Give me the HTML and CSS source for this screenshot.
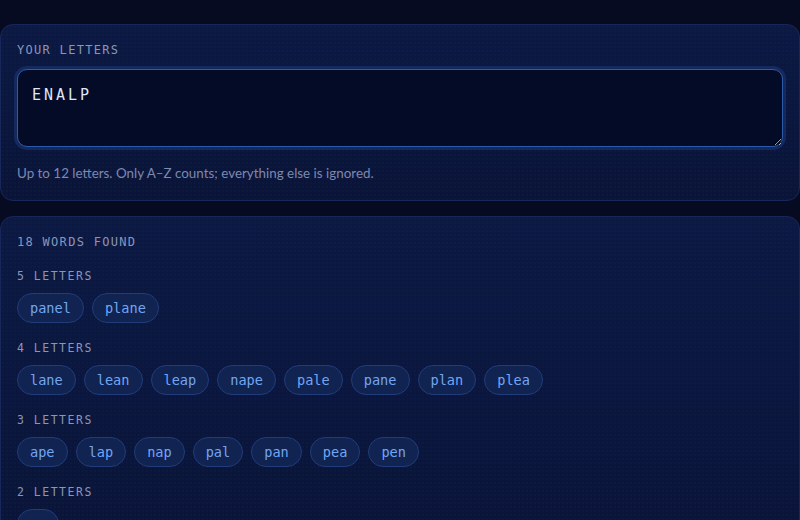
FILE: index.html
```html
<!DOCTYPE html>
<html lang="en">
<head>
<meta charset="utf-8">
<title>Word Finder</title>
<link rel="stylesheet" href="styles.css">
</head>
<body>
<main class="page">
  <section class="card">
    <label class="section-label" for="letters">YOUR LETTERS</label>
    <textarea id="letters" class="letters-input" spellcheck="false">ENALP</textarea>
    <p class="hint">Up to 12 letters. Only A–Z counts; everything else is ignored.</p>
  </section>

  <section class="card results">
    <div class="section-label">18 WORDS FOUND</div>

    <div class="group">
      <div class="group-label">5 LETTERS</div>
      <ul class="chips">
        <li class="chip">panel</li>
        <li class="chip">plane</li>
      </ul>
    </div>

    <div class="group">
      <div class="group-label">4 LETTERS</div>
      <ul class="chips">
        <li class="chip">lane</li>
        <li class="chip">lean</li>
        <li class="chip">leap</li>
        <li class="chip">nape</li>
        <li class="chip">pale</li>
        <li class="chip">pane</li>
        <li class="chip">plan</li>
        <li class="chip">plea</li>
      </ul>
    </div>

    <div class="group">
      <div class="group-label">3 LETTERS</div>
      <ul class="chips">
        <li class="chip">ape</li>
        <li class="chip">lap</li>
        <li class="chip">nap</li>
        <li class="chip">pal</li>
        <li class="chip">pan</li>
        <li class="chip">pea</li>
        <li class="chip">pen</li>
      </ul>
    </div>

    <div class="group">
      <div class="group-label">2 LETTERS</div>
      <ul class="chips">
        <li class="chip">pa</li>
      </ul>
    </div>
  </section>
</main>
</body>
</html>
```

FILE: styles.css
```css
* { box-sizing: border-box; }

html, body {
  margin: 0;
  padding: 0;
  background: #060b22;
  height: 100%;
  overflow: hidden;
}

body {
  font-family: "Lato", "Noto Sans", sans-serif;
  color: #dde4f5;
}

.page {
  padding-top: 24px;
  display: flex;
  flex-direction: column;
  gap: 15px;
}

.card {
  border: 1px solid #18275a;
  border-radius: 13px;
  padding: 17px 16px 17px;
  background:
    radial-gradient(rgba(120, 150, 230, 0.04) 0.6px, transparent 0.9px) 0 0 / 4px 4px,
    linear-gradient(180deg, #0b1943 0%, #0a1438 100%);
}

.section-label {
  display: block;
  font-family: "DejaVu Sans Mono", monospace;
  font-size: 12px;
  line-height: 16px;
  letter-spacing: 1.3px;
  color: #8a95b9;
}

.letters-input {
  display: block;
  width: 100%;
  height: 78px;
  margin: 11px 0 0;
  padding: 16px 14px 12px;
  font-family: "DejaVu Sans Mono", monospace;
  font-size: 15px;
  letter-spacing: 3px;
  color: #dfe6f7;
  background: #040b26;
  border: 1px solid #2d5aa9;
  border-radius: 10px;
  box-shadow: 0 0 0 3px #14295e;
  outline: none;
  resize: vertical;
}

.hint {
  margin: 16px 0 0;
  font-size: 13.4px;
  line-height: 20px;
  color: #7c89b0;
}

.results .section-label {
  margin-bottom: 18px;
}

.group + .group {
  margin-top: 17px;
}

.group-label {
  font-family: "DejaVu Sans Mono", monospace;
  font-size: 11.5px;
  line-height: 16px;
  letter-spacing: 1.5px;
  color: #8a95b9;
  margin-bottom: 9px;
}

.chips {
  list-style: none;
  margin: 0;
  padding: 0;
  display: flex;
  flex-wrap: wrap;
  gap: 8px;
}

.chip {
  font-family: "DejaVu Sans Mono", monospace;
  font-size: 13.6px;
  line-height: 16px;
  padding: 6px 12px;
  border: 1px solid #213c7a;
  border-radius: 999px;
  background: #112351;
  color: #72a6f2;
}
```
